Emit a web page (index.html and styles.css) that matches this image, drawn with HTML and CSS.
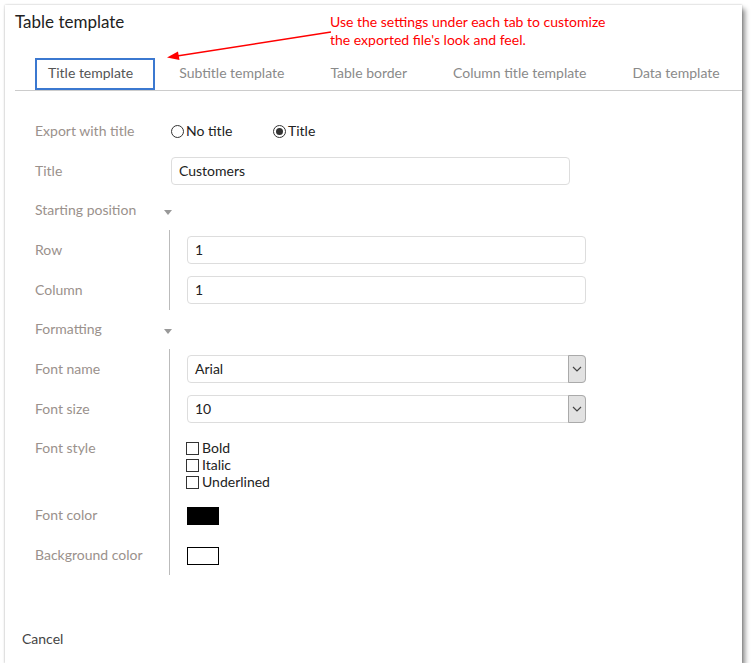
FILE: index.html
```html
<!DOCTYPE html>
<html>
<head>
<meta charset="utf-8">
<link rel="stylesheet" href="styles.css">
</head>
<body>
<div class="dialog">
  <div class="header">
    <h1 class="title">Table template</h1>
    <div class="note">Use the settings under each tab to customize<br>the exported file's look and feel.</div>
    <svg class="arrow" width="180" height="40" viewBox="0 0 180 40">
      <line x1="166" y1="5" x2="12" y2="29" stroke="#f00" stroke-width="1.4"/>
      <path d="M2 30.5 L13 24.5 L14.5 33 Z" fill="#f00"/>
    </svg>
    <div class="tabs">
      <div class="tab active">Title template</div>
      <div class="tab">Subtitle template</div>
      <div class="tab">Table border</div>
      <div class="tab">Column title template</div>
      <div class="tab">Data template</div>
    </div>
  </div>
  <div class="form">
    <div class="row">
      <div class="label">Export with title</div>
      <div class="control radios">
        <label class="radio"><span class="dot"></span>No title</label>
        <label class="radio"><span class="dot on"></span>Title</label>
      </div>
    </div>
    <div class="row">
      <div class="label">Title</div>
      <div class="control"><div class="input">Customers</div></div>
    </div>
    <div class="row section">
      <div class="label">Starting position</div>
      <span class="caret"></span>
    </div>
    <div class="group">
      <div class="row">
        <div class="label">Row</div>
        <div class="control"><div class="input">1</div></div>
      </div>
      <div class="row">
        <div class="label">Column</div>
        <div class="control"><div class="input">1</div></div>
      </div>
    </div>
    <div class="row section">
      <div class="label">Formatting</div>
      <span class="caret"></span>
    </div>
    <div class="group">
      <div class="row">
        <div class="label">Font name</div>
        <div class="control"><div class="input select"><span>Arial</span><span class="sbtn"><svg width="10" height="6" viewBox="0 0 10 6"><path d="M1 1 L5 5 L9 1" fill="none" stroke="#444" stroke-width="1.2"/></svg></span></div></div>
      </div>
      <div class="row">
        <div class="label">Font size</div>
        <div class="control"><div class="input select"><span>10</span><span class="sbtn"><svg width="10" height="6" viewBox="0 0 10 6"><path d="M1 1 L5 5 L9 1" fill="none" stroke="#444" stroke-width="1.2"/></svg></span></div></div>
      </div>
      <div class="row tall">
        <div class="label">Font style</div>
        <div class="control checks">
          <label class="check"><span class="box"></span>Bold</label>
          <label class="check"><span class="box"></span>Italic</label>
          <label class="check"><span class="box"></span>Underlined</label>
        </div>
      </div>
      <div class="row">
        <div class="label">Font color</div>
        <div class="control"><span class="swatch black"></span></div>
      </div>
      <div class="row">
        <div class="label">Background color</div>
        <div class="control"><span class="swatch white"></span></div>
      </div>
    </div>
  </div>
  <div class="footer">Cancel</div>
</div>
</body>
</html>
```

FILE: styles.css
```css
html, body {
  margin: 0;
  padding: 0;
  background: #fff;
}
body {
  font-family: Lato, "Open Sans", sans-serif;
  font-size: 14px;
  color: #222;
}
.dialog {
  position: relative;
  margin: 5px 0 0 5px;
  width: 737px;
  height: 658px;
  background: #fff;
  box-shadow: 0 0 2px rgba(0,0,0,.25), 3px 4px 5px rgba(0,0,0,.45);
  display: flex;
  flex-direction: column;
}
.header {
  position: relative;
  padding-left: 10px;
}
.title {
  margin: 0;
  padding-top: 6px;
  font-size: 17px;
  font-weight: normal;
  line-height: 22px;
  color: #222;
}
.note {
  position: absolute;
  left: 325px;
  top: 8px;
  color: #f00;
  font-size: 14px;
  line-height: 18px;
}
.arrow {
  position: absolute;
  left: 160px;
  top: 22px;
}
.tabs {
  margin-top: 25px;
  display: flex;
  padding-left: 20px;
  border-bottom: 1px solid #ccc;
  height: 32px;
}
.tab {
  box-sizing: border-box;
  height: 32px;
  line-height: 25px;
  padding: 0 11px;
  border: 2px solid transparent;
  color: #8a8a8a;
  margin-right: 20px;
  white-space: nowrap;
}
.tab.active {
  border-color: #3b78d0;
  color: #555;
  padding-right: 20px;
  margin-right: 11px;
}
.form {
  padding: 20px 0 0 30px;
}
.row {
  display: flex;
  align-items: center;
  height: 40px;
}
.row.section {
  height: 39px;
}
.label {
  width: 136px;
  flex: none;
  color: #9a918c;
  padding-bottom: 2px;
}
.control {
  display: flex;
  align-items: center;
}
.radio {
  display: flex;
  align-items: center;
  width: 102px;
  color: #222;
  padding-bottom: 2px;
}
.dot {
  box-sizing: border-box;
  width: 13px;
  height: 13px;
  border: 1px solid #333;
  border-radius: 50%;
  margin-right: 2px;
  margin-top: 2px;
  position: relative;
}
.dot.on::after {
  content: "";
  position: absolute;
  left: 2px;
  top: 2px;
  width: 7px;
  height: 7px;
  border-radius: 50%;
  background: #333;
}
.input {
  box-sizing: border-box;
  width: 399px;
  height: 28px;
  border: 1px solid #ddd;
  border-radius: 4px;
  padding-left: 7px;
  line-height: 25px;
  color: #222;
}
.section .label {
  width: 129px;
}
.caret {
  width: 0;
  height: 0;
  border-left: 4.5px solid transparent;
  border-right: 4.5px solid transparent;
  border-top: 5px solid #999;
  margin-top: 3px;
}
.group .label {
  width: 134px;
}
.group .control {
  align-self: stretch;
  border-left: 1px solid #bbb;
  padding-left: 17px;
}
.select {
  display: flex;
  justify-content: space-between;
}
.sbtn {
  box-sizing: border-box;
  width: 18px;
  height: 28px;
  margin-top: -1px;
  margin-right: -1px;
  background: #e2e2e2;
  border: 1px solid #aaa;
  border-radius: 0 4px 4px 0;
  display: flex;
  align-items: center;
  justify-content: center;
}
.row.tall {
  height: 66px;
  align-items: flex-start;
}
.row.tall .label {
  padding-top: 10px;
}
.checks {
  flex-direction: column;
  align-items: flex-start !important;
  padding-top: 10px;
}
.check {
  display: flex;
  align-items: center;
  height: 17px;
  line-height: 17px;
  color: #222;
}
.box {
  box-sizing: border-box;
  width: 13px;
  height: 13px;
  border: 1px solid #333;
  margin: 1px 3px 0 -1px;
}
.swatch {
  box-sizing: border-box;
  display: block;
  width: 32px;
  height: 18px;
  margin-top: 2px;
  border: 1px solid #000;
}
.swatch.black { background: #000; }
.swatch.white { background: #fff; }
.footer {
  margin-top: auto;
  padding: 0 0 14px 17px;
  line-height: 20px;
  color: #444;
}
```
